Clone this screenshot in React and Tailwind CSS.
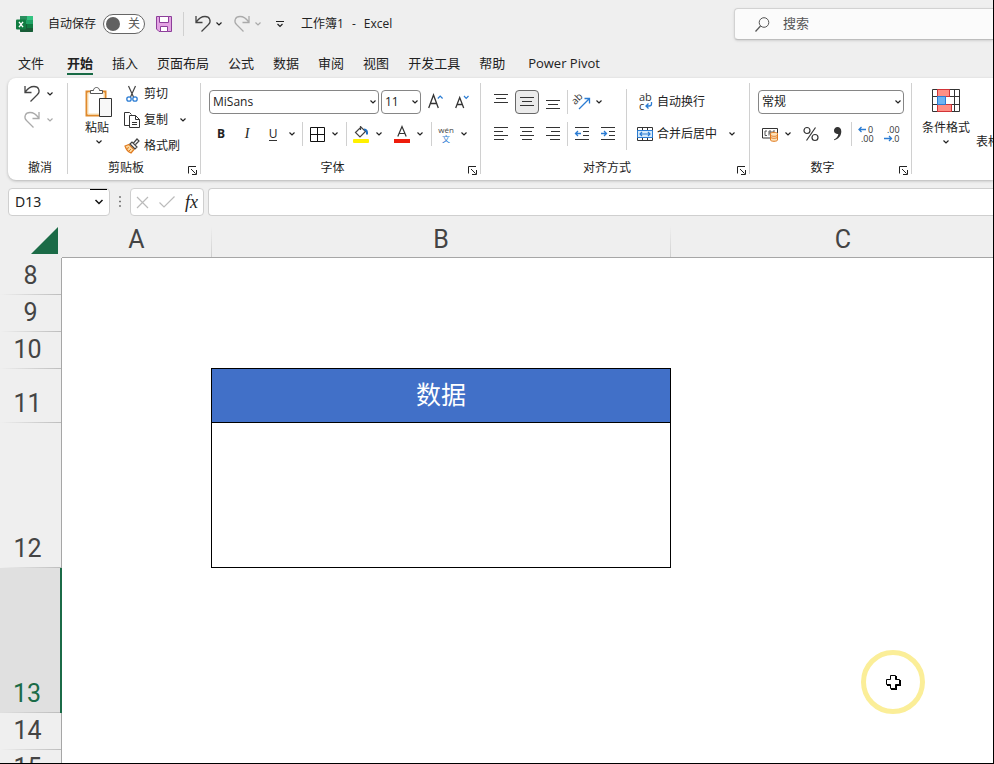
import React, { useState } from "react";

const tabs = ["文件", "开始", "插入", "页面布局", "公式", "数据", "审阅", "视图", "开发工具", "帮助", "Power Pivot"];

const rows = [
  { n: 8, height: "h-[37px]" },
  { n: 9, height: "h-[37px]" },
  { n: 10, height: "h-[37px]", cell: "border-b border-black" },
  { n: 11, height: "h-[54px]", cell: "border-x border-b border-black bg-[#4170c8] text-white", text: "数据" },
  { n: 12, height: "h-[145px]", cell: "border-x border-b border-black" },
  { n: 13, height: "h-[145px]" },
  { n: 14, height: "h-[37px]" },
  { n: 15, height: "h-[37px]" },
];

function Icon({ w = 16, h = 16, className = "", children }) {
  return (
    <svg
      width={w}
      height={h}
      viewBox={`0 0 ${w} ${h}`}
      fill="none"
      stroke="#333"
      className={`shrink-0 overflow-visible ${className}`}
      aria-hidden="true"
    >
      {children}
    </svg>
  );
}

function Caret({ label, className = "", color = "#222" }) {
  return (
    <button type="button" aria-label={label} className={`flex h-5 w-3 shrink-0 items-center justify-center ${className}`}>
      <Icon w={6} h={4}>
        <path d="M.5 .5 3 3 5.5 .5" stroke={color} strokeWidth="1.2" />
      </Icon>
    </button>
  );
}

function ToolButton({ label, active, className = "w-[26px]", children }) {
  return (
    <button type="button" aria-label={label} className={`flex h-6 shrink-0 items-center justify-center ${className}`}>
      {active ? (
        <span className="flex size-6 items-center justify-center rounded border border-[#666] bg-[#ebebeb]">{children}</span>
      ) : (
        children
      )}
    </button>
  );
}

function SplitButton({ label, className = "", children }) {
  return (
    <div className={`flex items-center gap-0.5 ${className}`}>
      <ToolButton label={label} className="w-5">
        {children}
      </ToolButton>
      <Caret label={`${label}选项`} />
    </div>
  );
}

function Divider({ className = "h-6" }) {
  return <span className={`w-px shrink-0 bg-[#d0d0d0] ${className}`} />;
}

function Group({ title, launcher, className = "", children }) {
  return (
    <section className={`flex shrink-0 flex-col pt-[3px] ${className}`}>
      <div className="h-[78px]">{children}</div>
      <div className={`relative flex h-[18px] items-center justify-center ${launcher ? "pr-4" : ""}`}>
        {title}
        {launcher && (
          <button type="button" aria-label={`${title}设置`} className="absolute right-[3px] bottom-0.5">
            <Icon w={9} h={9} className="block">
              <path d="M.5 7.500V.5H8M3 3l4.500 4.500M8.500 4v4.500H4" stroke="#222" strokeWidth="1" />
            </Icon>
          </button>
        )}
      </div>
    </section>
  );
}

function UndoIcon({ redo, color = "#444" }) {
  return (
    <Icon w={16} h={18} className={redo ? "-scale-x-100" : ""}>
      <path d="M1 1v6.500h6.500M1.300 7C4 3 7 1.500 10 1.500c5 0 6.500 5 3.500 8L6.500 16.500" stroke={color} strokeWidth="1.3" />
    </Icon>
  );
}

function Lines({ rows: items }) {
  return (
    <Icon w={16} h={16}>
      {items.map(([x1, x2, y]) => (
        <path key={y} d={`M${x1} ${y}H${x2}`} stroke="#333" />
      ))}
    </Icon>
  );
}

function Select({ label, value, className }) {
  return (
    <div className={`relative h-6 ${className}`}>
      <select
        aria-label={label}
        defaultValue={value}
        className="block h-full w-full appearance-none rounded border border-[#868686] bg-white pl-[3px] text-[#222] outline-none"
      >
        <option>{value}</option>
      </select>
      <Icon w={6} h={4} className="pointer-events-none absolute top-2.5 right-[3px]">
        <path d="M.5 .5 3 3 5.500 .5" stroke="#222" strokeWidth="1.2" />
      </Icon>
    </div>
  );
}

function TitleBar() {
  const [autoSave, setAutoSave] = useState(false);

  return (
    <header className="flex h-12 items-center pl-4">
      <Icon w={17} h={16}>
        <g stroke="none">
          <rect x="4" width="13" height="16" rx="1" fill="#21a366" />
          <path d="M4 0h7v4H4z" fill="#2a8f5f" />
          <path d="M11 0h5a1 1 0 0 1 1 1v3h-6z" fill="#33c481" />
          <path d="M4 8h13v7a1 1 0 0 1-1 1H5a1 1 0 0 1-1-1z" fill="#185c37" />
          <path d="M11 8h6v4h-6z" fill="#107c41" />
          <rect y="3.500" width="10" height="10" rx="1" fill="#107c41" />
        </g>
        <path d="M3 5.800l4 5.400M7 5.800l-4 5.400" stroke="#fff" strokeWidth="1.400" />
      </Icon>
      <span className="ml-[15px]">自动保存</span>
      <button
        type="button"
        role="switch"
        aria-checked={autoSave}
        aria-label="自动保存"
        onClick={() => setAutoSave(!autoSave)}
        className="ml-[7px] flex h-5 w-[42px] items-center justify-between rounded-full border border-[#666] bg-white pr-1 pl-0.5 text-[#555]"
      >
        <span className="size-3.5 rounded-full bg-[#616161]" />
        {autoSave ? "开" : "关"}
      </button>
      <button type="button" aria-label="保存" className="ml-[11px]">
        <Icon w={16} h={16}>
          <path d="M.5 .5h15v15H3L.5 13z" fill="#e3a3e3" stroke="#8d3f9a" />
          <path d="M3.500 .5h9v6h-9z" fill="#fff" stroke="#8d3f9a" />
          <path d="M4.500 10.500h7v5h-7z" fill="#fff" stroke="#8d3f9a" />
        </Icon>
      </button>
      <Divider className="ml-[11px] h-6" />
      <button type="button" aria-label="撤消" className="ml-[11px]">
        <UndoIcon />
      </button>
      <Caret label="撤消选项" className="ml-0.5" />
      <button type="button" aria-label="恢复" className="ml-[9px]">
        <UndoIcon redo color="#aaa" />
      </button>
      <Caret label="恢复选项" className="ml-0.5" color="#aaa" />
      <button type="button" aria-label="自定义快速访问工具栏" className="ml-3">
        <Icon w={8} h={8}>
          <path d="M0 1.500h8M1.500 4l2.500 2.500L6.500 4" stroke="#222" strokeWidth="1.200" />
        </Icon>
      </button>
      <h1 className="ml-[17px] flex flex-1 gap-2 whitespace-nowrap">
        <span>工作簿1</span>
        <span>-</span>
        <span>Excel</span>
      </h1>
      <label className="flex h-8 w-[259px] shrink-0 items-center rounded-l border border-r-0 border-[#d2d2d2] border-b-[#bdbdbd] bg-[#fbfbfb] pl-5 shadow-sm">
        <Icon w={15} h={15}>
          <circle cx="9" cy="5.500" r="4.800" stroke="#555" />
          <path d="M5.500 9 .5 14.500" stroke="#555" strokeWidth="1.200" />
        </Icon>
        <input
          type="search"
          aria-label="搜索"
          placeholder="搜索"
          className="ml-[13px] min-w-0 flex-1 bg-transparent text-[13px] outline-none placeholder:text-[#555]"
        />
      </label>
    </header>
  );
}

function Tabs() {
  return (
    <nav className="flex h-[30px] gap-[19px] pl-[18px] text-[13px] leading-5">
      {tabs.map((tab) => (
        <a
          key={tab}
          href="#"
          className={`flex h-[27px] items-center whitespace-nowrap border-b-2 pt-1 first:mr-1 last:ml-1 ${
            tab === "开始" ? "border-[#186a45] font-bold" : "border-transparent"
          }`}
        >
          {tab}
        </a>
      ))}
    </nav>
  );
}

function UndoGroup() {
  return (
    <Group title="撤消" className="w-[59px] pl-[5px]">
      <div className="flex h-[26px] items-center pl-[11px]">
        <button type="button" aria-label="撤消">
          <UndoIcon />
        </button>
        <Caret label="撤消选项" className="ml-1" />
      </div>
      <div className="flex h-[26px] items-center pl-[11px]">
        <button type="button" aria-label="恢复">
          <UndoIcon redo color="#aaa" />
        </button>
        <Caret label="恢复选项" className="ml-1" color="#aaa" />
      </div>
    </Group>
  );
}

function ClipboardGroup() {
  return (
    <Group title="剪贴板" launcher className="w-[132px]">
      <div className="flex">
        <div className="flex flex-col items-center pt-1.5 pl-[17px]">
          <button type="button" className="flex w-7 flex-col items-center">
            <Icon w={28} h={30}>
              <path d="M1.500 4.500h19v24h-19z" fill="#fff" stroke="#e08a2c" strokeWidth="2" />
              <path d="M3 6h16v21H3z" stroke="#f9dfb0" />
              <path d="M5.500 6.500v-3h3c0-4 6-4 6 0h3v3z" fill="#fff" stroke="#555" />
              <path d="M14.500 11.500h12v18h-12z" fill="#f8f8f8" stroke="#333" />
            </Icon>
            <span className="mt-[3px] mr-1 whitespace-nowrap leading-4">粘贴</span>
          </button>
          <Caret label="粘贴选项" className="-mt-1" />
        </div>
        <div className="pl-[11px]">
          <button type="button" className="flex h-[26px] items-center gap-1">
            <Icon w={16} h={16}>
              <path d="M4.500 0l5 11M11.500 0l-5 11" stroke="#444" strokeWidth="1.200" />
              <circle cx="5" cy="13" r="2.200" stroke="#2b7cd3" strokeWidth="1.300" />
              <circle cx="11" cy="13" r="2.200" stroke="#2b7cd3" strokeWidth="1.300" />
            </Icon>
            剪切
          </button>
          <div className="flex items-center">
            <button type="button" className="flex h-[26px] items-center gap-1">
              <Icon w={16} h={16}>
                <path d="M5 13.500H.5V.5h5l2 2" stroke="#333" />
                <path d="M5.500 3.500h6l4 4v8h-10zM11.500 3.500v4h4M8 10.500h5M8 12.500h5" stroke="#333" />
              </Icon>
              复制
            </button>
            <Caret label="复制选项" className="ml-[9px]" />
          </div>
          <button type="button" className="flex h-[26px] items-center gap-1">
            <Icon w={16} h={16}>
              <path d="M1 8l4-1.500 5 5-3 3.500C4 14 2 11 1 8z" fill="#fbd9a0" stroke="#e07a1f" strokeWidth="1.200" />
              <path d="M3 10.500l2-1M5 13l2-2" stroke="#e07a1f" />
              <path d="M6 6l2-2 5 5-2 2zM9.500 5l3.500-4 2 2-3.500 3.500" fill="#fff" stroke="#444" strokeWidth="1.200" />
            </Icon>
            格式刷
          </button>
        </div>
      </div>
    </Group>
  );
}

function FontGroup() {
  return (
    <Group title="字体" launcher className="w-[279px]">
      <div className="flex h-[37px] items-center pt-1 pl-2">
        <Select label="字体名称" value="MiSans" className="w-[170px]" />
        <Select label="字号" value="11" className="ml-0.5 w-10" />
        <button type="button" aria-label="增大字号" className="ml-[7px]">
          <Icon w={15} h={16}>
            <path d="M.7 14 5.500 1l4.800 13M2.300 9.500h6.400" strokeWidth="1.300" />
            <path d="M9.800 4.500 12.200 2l2.400 2.500" stroke="#2b7cd3" strokeWidth="1.200" />
          </Icon>
        </button>
        <button type="button" aria-label="减小字号" className="ml-3">
          <Icon w={14} h={16}>
            <path d="M.7 14 4.700 3.500 8.700 14M2 10.500h5.400" strokeWidth="1.300" />
            <path d="M9 2l2.200 2.300L13.500 2" stroke="#2b7cd3" strokeWidth="1.200" />
          </Icon>
        </button>
      </div>
      <div className="flex h-8 items-center pl-[7px]">
        <ToolButton label="加粗">
          <span className="font-bold">B</span>
        </ToolButton>
        <ToolButton label="倾斜">
          <span className="font-['Liberation_Serif',serif] text-sm italic">I</span>
        </ToolButton>
        <ToolButton label="下划线">
          <span className="border-b border-[#333] leading-[13px]">U</span>
        </ToolButton>
        <Caret label="下划线选项" />
        <Divider className="mx-1 h-6" />
        <SplitButton label="边框">
          <Icon w={15} h={15}>
            <path d="M.5 .5h14v14H.5zM7.500 0v15M0 7.500h15" stroke="#111" />
          </Icon>
        </SplitButton>
        <Divider className="mr-1 ml-[5px] h-6" />
        <SplitButton label="填充颜色">
          <Icon w={18} h={18}>
            <path d="M8.500 1v4M3.500 7.500 9 2l4.500 4.500L8 12z" stroke="#444" strokeWidth="1.200" />
            <path d="M12 4.500c2.500 0 3.300 1.500 3 5" stroke="#1f6fc0" strokeWidth="2" />
            <rect x="1" y="14" width="16" height="4" rx="1" fill="#fff100" stroke="none" />
          </Icon>
        </SplitButton>
        <SplitButton label="字体颜色" className="ml-[7px]">
          <Icon w={16} h={18}>
            <path d="M3.800 11.500 8 1.500l4.200 10M5.200 8.500h5.600" strokeWidth="1.200" />
            <rect y="14" width="16" height="4" fill="#ee1c0c" stroke="none" />
          </Icon>
        </SplitButton>
        <Divider className="mr-1 ml-[5px] h-6" />
        <SplitButton label="拼音">
          <span className="flex flex-col items-center text-[8px] leading-[9px]">
            <span className="text-[#444]">wén</span>
            <span className="text-[#2b7cd3]">文</span>
          </span>
        </SplitButton>
      </div>
    </Group>
  );
}

function AlignGroup() {
  return (
    <Group title="对齐方式" launcher className="w-[268px]">
      <div className="flex pt-1">
        <div>
          <div className="flex h-[33px] items-center pl-[7px]">
            <ToolButton label="顶端对齐">
              <Lines rows={[[1, 15, 0.5], [3, 13, 4.5], [1, 15, 8.5]]} />
            </ToolButton>
            <ToolButton label="垂直居中" active>
              <Lines rows={[[1, 15, 3.5], [3, 13, 7.5], [1, 15, 11.5]]} />
            </ToolButton>
            <ToolButton label="底端对齐">
              <Lines rows={[[1, 15, 6.5], [3, 13, 10.5], [1, 15, 14.5]]} />
            </ToolButton>
            <Divider className="mr-0.5 ml-px h-6" />
            <ToolButton label="方向" className="w-6">
              <Icon w={18} h={18}>
                <text x="0" y="9" fontSize="10" fill="#333" stroke="none" transform="rotate(-45 5 8)">
                  ab
                </text>
                <path d="M6 16 16 6M11.500 5.500h5v5" stroke="#2b7cd3" strokeWidth="1.300" />
              </Icon>
            </ToolButton>
            <Caret label="方向选项" className="-ml-px" />
          </div>
          <div className="flex h-8 items-center pl-[7px]">
            <ToolButton label="左对齐">
              <Lines rows={[[1, 15, 1.5], [1, 10, 5.5], [1, 15, 9.5], [1, 11, 13.5]]} />
            </ToolButton>
            <ToolButton label="居中">
              <Lines rows={[[1, 15, 1.5], [3, 13, 5.5], [1, 15, 9.5], [3, 13, 13.5]]} />
            </ToolButton>
            <ToolButton label="右对齐">
              <Lines rows={[[1, 15, 1.5], [6, 15, 5.5], [1, 15, 9.5], [5, 15, 13.5]]} />
            </ToolButton>
            <Divider className="mr-px ml-px h-6" />
            <ToolButton label="减少缩进量">
              <Icon>
                <path d="M1 1.500h14M9 5.500h6M9 9.500h6M1 13.500h14" />
                <path d="M7 7.500H1.500M4 5 1.500 7.500 4 10" stroke="#2b7cd3" strokeWidth="1.300" />
              </Icon>
            </ToolButton>
            <ToolButton label="增加缩进量">
              <Icon>
                <path d="M1 1.500h14M9 5.500h6M9 9.500h6M1 13.500h14" />
                <path d="M1 7.500h5.500M4 5l2.500 2.500L4 10" stroke="#2b7cd3" strokeWidth="1.300" />
              </Icon>
            </ToolButton>
          </div>
        </div>
        <Divider className="mt-1 ml-[5px] h-[61px]" />
        <div className="pl-2.5">
          <button type="button" className="flex h-[33px] items-center gap-1">
            <Icon w={16} h={18}>
              <text x="2" y="8" fontSize="11" fill="#333" stroke="none">ab</text>
              <text x="2" y="17" fontSize="11" fill="#333" stroke="none">c</text>
              <path d="M14.500 9v2c0 1.500-1 2-2.500 2H9M11.500 10.500 9 13l2.500 2.500" stroke="#2b7cd3" strokeWidth="1.300" />
            </Icon>
            自动换行
          </button>
          <div className="flex h-8 items-center">
            <button type="button" className="flex items-center gap-1">
              <Icon w={16} h={16}>
                <path d="M.5 1.500h15v13H.5zM5.500 1.500v3M10.500 1.500v3M5.500 11.500v3M10.500 11.500v3" fill="#fff" />
                <path d="M.5 4.500h15v7H.5z" fill="#d5eafa" stroke="#2b7cd3" />
                <path d="M3 8h10M5 6 3 8l2 2M11 6l2 2-2 2" stroke="#2b7cd3" strokeWidth="1.200" />
              </Icon>
              合并后居中
            </button>
            <Caret label="合并选项" className="ml-[9px]" />
          </div>
        </div>
      </div>
    </Group>
  );
}

function NumberGroup() {
  return (
    <Group title="数字" launcher className="w-[161px]">
      <div className="flex h-[37px] items-center pt-1 pl-2">
        <Select label="数字格式" value="常规" className="w-[146px]" />
      </div>
      <div className="flex h-8 items-center pl-2.5">
        <SplitButton label="会计数字格式">
          <Icon w={17} h={15}>
            <path d="M8 11H.5V1.500h15V6" />
            <path d="M5 4H3v4.500h2M7 8.500V4h2v2H7M11 6V4h2" stroke="#555" />
            <path d="M8.500 6.500c0-1.500 7-1.500 7 0v6.500c0 1.700-7 1.700-7 0zM8.500 8.500c1.500 1 5.500 1 7 0M8.500 10.500c1.500 1 5.500 1 7 0" fill="#fde2b8" stroke="#e07a1f" />
          </Icon>
        </SplitButton>
        <ToolButton label="百分比样式" className="ml-1 w-[26px]">
          <Icon w={16} h={16}>
            <circle cx="4" cy="4.500" r="3" strokeWidth="1.200" />
            <circle cx="12" cy="11.500" r="3" strokeWidth="1.200" />
            <path d="M12.500 1.500l-9 13" strokeWidth="1.200" />
          </Icon>
        </ToolButton>
        <ToolButton label="千位分隔样式">
          <Icon w={9} h={14}>
            <path d="M4.500 0a3.500 3.500 0 1 0 .8 6.900C5 9.500 3.500 11 1 12.500v.8C5.500 12 8.300 9 8.300 4.500 8.300 1.700 6.800 0 4.500 0z" fill="#333" stroke="none" />
          </Icon>
        </ToolButton>
        <Divider className="mx-px h-6" />
        <ToolButton label="增加小数位数">
          <Icon w={16} h={18}>
            <text x="10" y="8" fontSize="9" fill="#333" stroke="none">0</text>
            <text x="3" y="17" fontSize="9" fill="#333" stroke="none">.00</text>
            <path d="M8 4.500H1M3.500 2 1 4.500 3.500 7" stroke="#2b7cd3" strokeWidth="1.300" />
          </Icon>
        </ToolButton>
        <ToolButton label="减少小数位数">
          <Icon w={16} h={18}>
            <text x="3" y="8" fontSize="9" fill="#333" stroke="none">.00</text>
            <text x="8" y="17" fontSize="9" fill="#333" stroke="none">.0</text>
            <path d="M0 13.500h7.500M5 11l2.500 2.500L5 16" stroke="#2b7cd3" strokeWidth="1.300" />
          </Icon>
        </ToolButton>
      </div>
    </Group>
  );
}

function StylesGroup() {
  return (
    <div className="flex min-w-0 flex-1 overflow-hidden whitespace-nowrap">
      <div className="flex shrink-0 flex-col items-center pt-[11px] pl-2.5">
        <button type="button" className="flex flex-col items-center">
          <Icon w={28} h={23}>
            <path d="M.5 .5h27v22H.5zM.5 7.500h27M.5 15.500h27M5.500 .5v22M22.500 .5v22" fill="#fff" />
            <path d="M5.500 .5h12v7h-12zM5.500 15.500h14v7h-14z" fill="#ff8f85" stroke="#d13438" />
            <path d="M5.500 7.500h8v8h-8z" fill="#6db3f2" stroke="#2b7cd3" />
          </Icon>
          <span className="mt-1.5 leading-5">条件格式</span>
        </button>
        <Caret label="条件格式选项" className="-mt-1.5" />
      </div>
      <button type="button" className="shrink-0 pt-7 pl-1.5">
        表格
      </button>
    </div>
  );
}

function FormulaBar() {
  return (
    <div className="mt-2 flex h-7 shrink-0 pl-2">
      <div className="relative flex w-[102px] items-center rounded border border-[#cfcfcf] bg-white pr-1">
        <input
          aria-label="名称框"
          defaultValue="D13"
          className="w-full min-w-0 bg-transparent pl-1.5 font-['Noto_Sans',sans-serif] text-sm text-[#222] outline-none"
        />
        <span className="absolute top-0 right-0.5 h-px w-[17px] bg-black" />
        <button type="button" aria-label="名称列表" className="pr-0.5">
          <Icon w={8} h={6}>
            <path d="M.5 1 4 4.500 7.500 1" stroke="#111" strokeWidth="1.500" />
          </Icon>
        </button>
      </div>
      <Icon w={2} h={12} className="mx-[9px] mt-2">
        <path d="M0 1h2M0 5.500h2M0 10h2" stroke="#777" strokeWidth="1.500" />
      </Icon>
      <div className="flex w-[74px] items-center justify-between rounded border border-[#cfcfcf] bg-white pr-[5px] pl-[5px]">
        <button type="button" aria-label="取消">
          <Icon w={13} h={13}>
            <path d="M1 1l11 11M12 1 1 12" stroke="#bbb" strokeWidth="1.200" />
          </Icon>
        </button>
        <button type="button" aria-label="输入">
          <Icon w={16} h={12}>
            <path d="M.5 6.500l4.500 4.500L15.500 .5" stroke="#bbb" strokeWidth="1.200" />
          </Icon>
        </button>
        <button type="button" className="font-['Liberation_Serif',serif] text-lg leading-6 italic">
          fx
        </button>
      </div>
      <input aria-label="编辑栏" className="ml-1 min-w-0 flex-1 rounded-l border border-r-0 border-[#cfcfcf] bg-white px-2 outline-none" />
    </div>
  );
}

function Sheet() {
  const head = "h-[42px] border-b border-[#a6a6a6] p-0 pb-[3px] align-bottom font-normal leading-7";

  return (
    <div className="min-h-0 flex-1 overflow-hidden">
      {/* column C runs past the right edge of the window */}
      <table className="w-[calc(100%+22px)] table-fixed border-separate border-spacing-0 font-['Roboto','Noto_Sans_CJK_SC',sans-serif] text-[25px] text-[#444]">
        <colgroup>
          <col className="w-[62px]" />
          <col className="w-[149px]" />
          <col className="w-[460px]" />
          <col />
        </colgroup>
        <thead>
          <tr>
            <th className="h-[42px] p-0 pr-[4px] pb-1 align-bottom">
              <button type="button" aria-label="全选" className="ml-auto block">
                <Icon w={27} h={27} className="block">
                  <path d="M27 0v27H0z" fill="#1b6b47" stroke="none" />
                </Icon>
              </button>
            </th>
            <th className={head}>A</th>
            <th
              className={`${head} bg-[linear-gradient(to_bottom,transparent_25%,#cfcfcf),linear-gradient(to_bottom,transparent_25%,#cfcfcf)] bg-[length:1px_100%] bg-[position:left,right] bg-no-repeat`}
            >
              B
            </th>
            <th className={head}>C</th>
          </tr>
        </thead>
        <tbody className="bg-white">
          {rows.map((row) => (
            <tr key={row.n}>
              <th
                className={`${row.height} p-0 pb-[5px] align-bottom font-normal leading-7 bg-bottom bg-no-repeat bg-[length:100%_1px] bg-[linear-gradient(to_right,transparent,#bdbdbd)] ${
                  row.n < 10 ? "pr-0" : "pr-1.5"
                } ${
                  row.n === 13
                    ? "border-r-2 border-[#1b6b47] bg-[#e0e0e0] text-[#1b6b47]"
                    : "border-r border-[#a6a6a6] bg-[#efefef]"
                }`}
              >
                {row.n}
              </th>
              <td className="p-0" />
              <td className={`p-0 text-center leading-8 ${row.cell || ""}`}>{row.text}</td>
              <td className="p-0" />
            </tr>
          ))}
        </tbody>
      </table>
    </div>
  );
}

export default function App() {
  return (
    <div className="relative flex h-screen flex-col overflow-hidden border-r border-b border-black bg-[#efefef] font-['Open_Sans','Noto_Sans_CJK_SC',sans-serif] text-xs text-[#222]">
      <TitleBar />
      <Tabs />
      <div className="ml-2 flex shrink-0 rounded-l-lg bg-white pb-[3px] shadow-[0_1px_3px_rgba(0,0,0,0.25)]">
        <UndoGroup />
        <Divider className="mt-[5px] h-[91px]" />
        <ClipboardGroup />
        <Divider className="mt-[5px] h-[91px]" />
        <FontGroup />
        <Divider className="mt-[5px] h-[91px]" />
        <AlignGroup />
        <Divider className="mt-[5px] h-[91px]" />
        <NumberGroup />
        <Divider className="mt-[5px] h-[91px]" />
        <StylesGroup />
      </div>
      <FormulaBar />
      <Sheet />
      {/* pointer with click highlight */}
      <div className="pointer-events-none absolute right-[68px] bottom-[49px] flex size-16 items-center justify-center rounded-full border-[5px] border-[#fbee98]">
        <Icon w={16} h={16}>
          <path d="M6 2h6v4h4v6h-4v4H6v-4H2V6h4z" fill="#000" stroke="none" />
          <path d="M5.500 1.500h5v4h4v5h-4v4h-5v-4h-4v-5h4z" fill="#fff" stroke="#000" />
        </Icon>
      </div>
    </div>
  );
}
